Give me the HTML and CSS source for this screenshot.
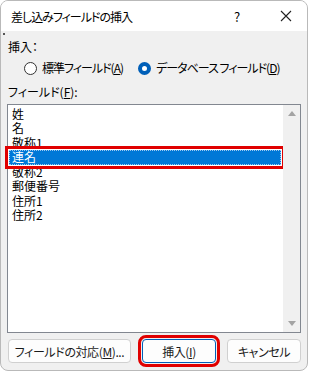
FILE: index.html
```html
<!DOCTYPE html>
<html lang="ja">
<head>
  <meta charset="UTF-8" />
  <title>差し込みフィールドの挿入</title>
  <link rel="stylesheet" href="styles.css">
</head>
<body>
  <div class="window">
    <!-- title bar -->
    <div class="titlebar">
      <span class="title">差し込みフィールドの挿入</span>
      <span class="help">?</span>
      <svg class="close" width="12" height="12" viewBox="0 0 12 12">
        <path d="M1 1 L11 11 M11 1 L1 11" stroke="#222" stroke-width="1.1" fill="none"/>
      </svg>
    </div>

    <div class="content">
      <span class="dot"></span>
      <div class="label">挿入：</div>
      <div class="radios">
        <label class="radio"><span class="circle"></span>標準フィールド(<u>A</u>)</label>
        <label class="radio on"><span class="circle"></span>データベース フィールド(<u>D</u>)</label>
      </div>
      <div class="label">フィールド(<u>F</u>):</div>

      <div class="listbox">
        <ul class="items">
          <li>姓</li>
          <li>名</li>
          <li>敬称1</li>
          <li class="selected">連名</li>
          <li>敬称2</li>
          <li>郵便番号</li>
          <li>住所1</li>
          <li>住所2</li>
        </ul>
        <div class="scrollbar">
          <span class="arrow up"></span>
          <span class="arrow down"></span>
        </div>
      </div>

      <div class="buttons">
        <button class="btn wide">フィールドの対応(<u>M</u>)...</button>
        <button class="btn primary">挿入(<u>I</u>)</button>
        <button class="btn">キャンセル</button>
      </div>
    </div>
  </div>
</body>
</html>
```

FILE: styles.css
```css
* { margin: 0; padding: 0; box-sizing: border-box; }
html, body {
  background: #fff;
  font-family: "Noto Sans CJK JP", "Noto Sans", sans-serif;
  font-size: 12px;
  font-feature-settings: "palt";
  color: #000;
}
body { margin: 0; }

.window {
  width: 308px;
  height: 371px;
  border: 1px solid #b9b9b9;
  border-radius: 8px;
  overflow: hidden;
  background: #f0f0f0;
  display: flex;
  flex-direction: column;
}

/* Title bar */
.titlebar {
  height: 30px;
  background: #fff;
  display: flex;
  align-items: center;
  padding-left: 10px;
}
.title { flex: 1; font-size: 12px; letter-spacing: -1px; white-space: nowrap; }
.help { width: 20px; margin-right: 26px; font-size: 13px; }
.close { margin-right: 15px; }

.content {
  flex: 1;
  padding: 0 6px 0 6px;
  display: flex;
  flex-direction: column;
  position: relative;
}
.dot {
  position: absolute;
  left: 2px; top: 2px;
  width: 2px; height: 2px;
  background: #555;
}
.label { margin-top: 8px; height: 16px; line-height: 16px; padding-left: 1px; white-space: nowrap; }

.radios {
  display: flex;
  gap: 15px;
  padding-left: 17px;
  margin-top: 5px;
  height: 16px;
  line-height: 16px;
  letter-spacing: -1px;
  white-space: nowrap;
}
.radio { display: flex; align-items: center; flex-shrink: 0; }
.circle {
  width: 13px; height: 13px;
  border: 1px solid #333;
  border-radius: 50%;
  margin-right: 5px;
  background: #fff;
}
.radio.on .circle {
  border: 4px solid #005fb8;
  background: #fff;
}

.listbox {
  margin-top: 4px;
  height: 229px;
  border: 1px solid #828790;
  background: #fff;
  display: flex;
}
.items {
  flex: 1;
  list-style: none;
  padding: 2px 0 0 1px;
}
.items li {
  height: 14.43px;
  line-height: 14.43px;
  padding-left: 3px;
}
.items li.selected {
  background: #0078d7;
  color: #fff;
  margin-right: 2px;
  outline: 3px solid #e00000;
  outline-offset: 1px;
  border: 1px dotted #9ec9f0;
  line-height: 12.43px;
  padding-left: 2px;
}
.scrollbar {
  width: 17px;
  background: #f0f0f0;
  display: flex;
  flex-direction: column;
  justify-content: space-between;
  align-items: center;
  padding: 6px 0;
}
.arrow {
  width: 0; height: 0;
  border-left: 4px solid transparent;
  border-right: 4px solid transparent;
}
.arrow.up { border-bottom: 5px solid #a3a3a3; }
.arrow.down { border-top: 5px solid #a3a3a3; }

.buttons {
  display: flex;
  justify-content: space-between;
  margin-top: 6px;
  padding: 0 0 0 1px;
}
.btn {
  height: 24px;
  font-family: inherit;
  font-size: 12px;
  font-feature-settings: "palt";
  letter-spacing: -0.4px;
  background: #fdfdfd;
  border: 1px solid #d0d0d0;
  border-radius: 4px;
  color: #1a1a1a;
  width: 74px;
  padding: 0;
  white-space: nowrap;
}
.btn.wide { width: 123px; }
.btn.primary {
  border-color: #005fb8;
  outline: 3px solid #e00000;
  outline-offset: 1px;
}
```
